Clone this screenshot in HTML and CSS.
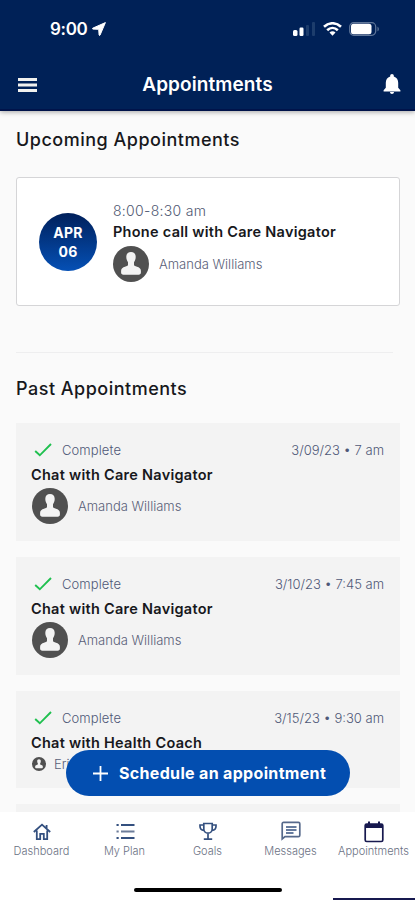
FILE: index.html
```html
<!DOCTYPE html>
<html lang="en">
<head>
  <meta charset="UTF-8">
  <meta name="viewport" content="width=device-width, initial-scale=1">
  <title>Appointments</title>
  <link rel="stylesheet" href="styles.css">
</head>
<body>
  <!-- shared icons -->
  <svg width="0" height="0" class="defs">
    <symbol id="avatar" viewBox="0 0 36 36">
      <circle cx="18" cy="18" r="18" fill="#505050"/>
      <path d="M18 6c-2.900 0-4.700 2-4.700 4.800 0 2.400.7 4.100 1.700 5.400v2.600c0 1.200-1.500 1.400-3 1.900-2.200.7-3.900 1.700-3.900 4.100v1.700c0 1.400.8 2.200 2.200 2.200h15.400c1.400 0 2.200-.8 2.200-2.200v-1.700c0-2.400-1.700-3.400-3.900-4.100-1.500-.5-3-.7-3-1.900v-2.600c1-1.300 1.700-3 1.700-5.400C22.700 8 20.900 6 18 6z" fill="#f3f3f3"/>
    </symbol>
    <symbol id="check" viewBox="0 0 18 14">
      <path d="M1.200 8l4.600 4.300L17 1" fill="none" stroke="#1fc04f" stroke-width="1.900"/>
    </symbol>
  </svg>

  <div class="app">
    <header class="header">
      <div class="status-bar">
        <div class="clock">
          <span>9:00</span>
          <svg width="14" height="14" viewBox="0 0 14 14"><path d="M13.400.6L.7 6.200c-.4.200-.3.900.2.900l5.800.2.400 5.700c0 .5.600.6.900.2z" fill="#fff" stroke="#fff" stroke-width="1" stroke-linejoin="round"/></svg>
        </div>
        <div class="status-icons">
          <svg width="23" height="14" viewBox="0 0 23 14">
            <rect x="0" y="8" width="4.500" height="6" rx="1.500" fill="#fff"/>
            <rect x="6.500" y="5.500" width="4" height="8.500" rx="1.200" fill="#fff"/>
            <rect x="13" y="3" width="3" height="11" rx="1" fill="#1d3d6c"/>
            <rect x="19" y="0" width="3" height="14" rx="1" fill="#1d3d6c"/>
          </svg>
          <svg width="19" height="14" viewBox="0 0 19 14" fill="none" stroke="#fff" stroke-width="2.600">
            <path d="M1 4.700c4.900-4.600 12.100-4.600 17 0"/>
            <path d="M4.200 8.200c3.100-2.900 7.500-2.900 10.600 0"/>
            <path d="M9.500 13.800l-3-3.300c1.700-1.600 4.300-1.600 6 0z" fill="#fff" stroke="none"/>
          </svg>
          <svg width="31" height="14" viewBox="0 0 31 14">
            <rect x=".7" y=".7" width="26" height="12.600" rx="4" fill="none" stroke="#5f7699" stroke-width="1.200"/>
            <rect x="2" y="1.800" width="20.500" height="10.400" rx="2.500" fill="#fff"/>
            <path d="M28.500 4.700v4.600c1.800-.6 1.800-4 0-4.600z" fill="#5f7699"/>
          </svg>
        </div>
      </div>
      <div class="title-bar">
        <svg width="19" height="14" viewBox="0 0 19 14" fill="#f1f1ee"><path d="M0 0h19v3H0zM0 5.500h19v3H0zM0 11h19v3H0z"/></svg>
        <h1>Appointments</h1>
        <svg width="18" height="21" viewBox="0 0 18 21" fill="#fff"><path d="M9 0c-1 0-1.800.8-1.800 1.700v.7C4.300 3.200 2.800 5.700 2.800 8.700v5L.6 16.300v1.200h16.800v-1.200l-2.200-2.600v-5c0-3-1.500-5.500-4.400-6.300v-.7C10.800.8 10 0 9 0zM7 18C7 19.200 7.900 20 9 20s2-.8 2-2z"/></svg>
      </div>
    </header>

    <main class="content">
      <h2>Upcoming Appointments</h2>
      <div class="upcoming">
        <div class="date"><span>APR</span><span>06</span></div>
        <div class="details">
          <p class="time">8:00-8:30 am</p>
          <h3>Phone call with Care Navigator</h3>
          <div class="person">
            <svg width="36" height="36"><use href="#avatar"/></svg>
            <span>Amanda Williams</span>
          </div>
        </div>
      </div>
      <hr>
      <h2 class="past-title">Past Appointments</h2>

      <div class="past">
        <div class="row">
          <svg width="18" height="14"><use href="#check"/></svg>
          <span class="done">Complete</span>
          <span class="when">3/09/23 • 7 am</span>
        </div>
        <h3>Chat with Care Navigator</h3>
        <div class="person">
          <svg width="36" height="36"><use href="#avatar"/></svg>
          <span>Amanda Williams</span>
        </div>
      </div>

      <div class="past">
        <div class="row">
          <svg width="18" height="14"><use href="#check"/></svg>
          <span class="done">Complete</span>
          <span class="when">3/10/23 • 7:45 am</span>
        </div>
        <h3>Chat with Care Navigator</h3>
        <div class="person">
          <svg width="36" height="36"><use href="#avatar"/></svg>
          <span>Amanda Williams</span>
        </div>
      </div>

      <div class="past short">
        <div class="row">
          <svg width="18" height="14"><use href="#check"/></svg>
          <span class="done">Complete</span>
          <span class="when">3/15/23 • 9:30 am</span>
        </div>
        <h3>Chat with Health Coach</h3>
        <div class="person small">
          <svg width="14" height="14"><use href="#avatar"/></svg>
          <span>Eri</span>
        </div>
      </div>

      <div class="past"></div>

      <button class="schedule">
        <svg width="15" height="15" viewBox="0 0 15 15" stroke="#fff" stroke-width="1.800"><path d="M7.500 0v15M0 7.500h15"/></svg>
        <span>Schedule an appointment</span>
      </button>
    </main>

    <nav class="tabs">
      <a class="tab">
        <svg width="20" height="20" viewBox="0 0 20 20" fill="none" stroke="#34507f" stroke-width="1.800"><path d="M1.800 11L10 3.600l8.200 7.400M4.800 9.500v8.700h3.400v-5.400h3.600v5.400h3.400V9.500M14.600 7V4"/></svg>
        <span>Dashboard</span>
      </a>
      <a class="tab">
        <svg width="20" height="20" viewBox="0 0 20 20"><path d="M1.500 3h2.200v2H1.500zM6 3h13.500v2H6zM1.500 16h2.200v2H1.500zM6 16h13.500v2H6z" fill="#34507f"/><path d="M1.500 9.500h2.200v2H1.500zM6 9.500h13.500v2H6z" fill="#6d7d9a"/></svg>
        <span>My Plan</span>
      </a>
      <a class="tab">
        <svg width="20" height="20" viewBox="0 0 20 20" fill="none" stroke="#34507f" stroke-width="1.700"><path d="M5.800 2.500h8.400V8a4.200 4.200 0 0 1-8.400 0zM5.800 4H2v1.200c0 2.400 1.500 4 4 4.200M14.200 4H18v1.200c0 2.400-1.500 4-4 4.200M10 12.200V18M5.800 18.200h8.400"/></svg>
        <span>Goals</span>
      </a>
      <a class="tab">
        <svg width="20" height="20" viewBox="0 0 20 20" fill="none" stroke="#56698b" stroke-width="1.700"><path d="M1.200 18V2.800c0-.9.500-1.400 1.400-1.400h14.800c.9 0 1.400.5 1.400 1.400v11.400c0 .9-.5 1.400-1.400 1.400H4z"/><path d="M5 6h10.500M5 9h10.500M5 12h7.500" stroke="#34507f" stroke-width="1.500"/></svg>
        <span>Messages</span>
      </a>
      <a class="tab">
        <svg width="20" height="22" viewBox="0 0 20 22" fill="none" stroke="#17194f" stroke-width="1.700"><rect x="1.200" y="3" width="17.600" height="17.500" rx="1.500"/><path d="M1.200 5h17.600" stroke-width="4"/><path d="M5 .5V4M15 .5V4" stroke-width="2"/></svg>
        <span>Appointments</span>
      </a>
      <div class="home-bar"></div>
      <div class="edge"></div>
    </nav>
  </div>
</body>
</html>
```
FILE: styles.css
```css
* {
  box-sizing: border-box;
}
body {
  margin: 0;
  font-family: Inter, 'Liberation Sans', sans-serif;
  background: #fafafa;
  color: #17181c;
}
.defs {
  position: absolute;
}
svg {
  display: block;
  flex: none;
}
h1, h2, h3, p {
  margin: 0;
  font-weight: 600;
  white-space: nowrap;
}
.app {
  height: 900px;
  display: flex;
  flex-direction: column;
  overflow: hidden;
}

/* header */
.header {
  height: 111px;
  flex: none;
  background: #002157;
  color: #fff;
  border-bottom: 2px solid #00134a;
  box-shadow: 0 1px 5px rgba(0, 0, 0, 0.35);
  z-index: 1;
}
.status-bar {
  display: flex;
  justify-content: space-between;
  height: 58px;
  padding: 0 35px 0 50px;
  align-items: center;
}
.clock {
  display: flex;
  align-items: center;
  gap: 4px;
  font-size: 17px;
  font-weight: 600;
  letter-spacing: -0.3px;
}
.status-icons {
  display: flex;
  gap: 7px;
}
.title-bar {
  display: flex;
  align-items: center;
  justify-content: space-between;
  height: 53px;
  padding: 0 14px 0 18px;
}
.title-bar h1 {
  margin-right: 5px;
  font-size: 19px;
  letter-spacing: 0.1px;
}

/* content */
.content {
  position: relative;
  flex: 1;
  min-height: 0;
  overflow: hidden;
  padding: 16px 15px 0 16px;
}
h2 {
  font-size: 18px;
  line-height: 25px;
  letter-spacing: 0.5px;
  font-weight: 500;
}
h3 {
  font-size: 14.5px;
  line-height: 20px;
  letter-spacing: 0.27px;
}
.upcoming {
  display: flex;
  align-items: center;
  height: 129px;
  margin-top: 25px;
  padding: 0 22px;
  background: #fff;
  border: 1px solid #d5d5d7;
  border-radius: 3px;
}
.date {
  width: 58px;
  height: 58px;
  border-radius: 50%;
  background: linear-gradient(#00205b, #0550b5);
  color: #fff;
  font-size: 14px;
  font-weight: 700;
  line-height: 19px;
  display: flex;
  flex-direction: column;
  align-items: center;
  justify-content: center;
  letter-spacing: 0.2px;
}
.details {
  margin: 0 0 2px 16px;
}
.time {
  font-size: 14px;
  line-height: 23px;
  font-weight: 300;
  letter-spacing: 0.3px;
  color: #4f5872;
}
.person {
  display: flex;
  align-items: center;
  gap: 10px;
  margin: 4px 0 0 1px;
  font-size: 13px;
  font-weight: 300;
  color: #596078;
}
.details .person {
  margin-left: 0;
}
hr {
  height: 1px;
  border: 0;
  margin: 46px 7px 0 0;
  background: #eeeeef;
}
.past-title {
  margin: 23px 0 22px;
}
.past {
  height: 118px;
  margin-bottom: 16px;
  padding: 17px 16px 0 15px;
  background: #f3f3f3;
}
.past.short {
  height: 97px;
}
.row {
  display: flex;
  align-items: center;
  height: 20px;
  font-size: 13px;
  font-weight: 300;
  color: #4f5877;
}
.row svg {
  margin-left: 3px;
}
.done {
  margin-left: 10px;
  letter-spacing: 0.1px;
}
.when {
  margin-left: auto;
}
.past h3 {
  margin-top: 5px;
}
.past .person {
  margin-top: 3px;
}
.past .small {
  gap: 8px;
}
.schedule {
  position: absolute;
  left: 66px;
  bottom: 16px;
  width: 284px;
  height: 46px;
  display: flex;
  align-items: center;
  gap: 11px;
  padding: 0 0 0 27px;
  border: 0;
  border-radius: 23px;
  background: #034eb0;
  color: #fff;
  font-family: inherit;
  font-size: 16px;
  font-weight: 700;
  letter-spacing: 0.33px;
  white-space: nowrap;
}

/* bottom tabs */
.tabs {
  position: relative;
  flex: none;
  height: 88px;
  display: grid;
  grid-template-columns: repeat(5, 83px);
  background: #fff;
}
.tab {
  display: flex;
  flex-direction: column;
  align-items: center;
  padding-top: 9px;
  height: 50px;
  font-size: 11px;
  font-weight: 300;
  color: #6a7183;
}
.tab span {
  margin-top: auto;
  line-height: 14px;
  padding-bottom: 4px;
}
.home-bar {
  position: absolute;
  left: 134px;
  bottom: 8px;
  width: 148px;
  height: 4px;
  border-radius: 2px;
  background: #000;
}
.edge {
  position: absolute;
  right: 0;
  bottom: 0;
  width: 82px;
  height: 2px;
  background: #17194f;
}
```
